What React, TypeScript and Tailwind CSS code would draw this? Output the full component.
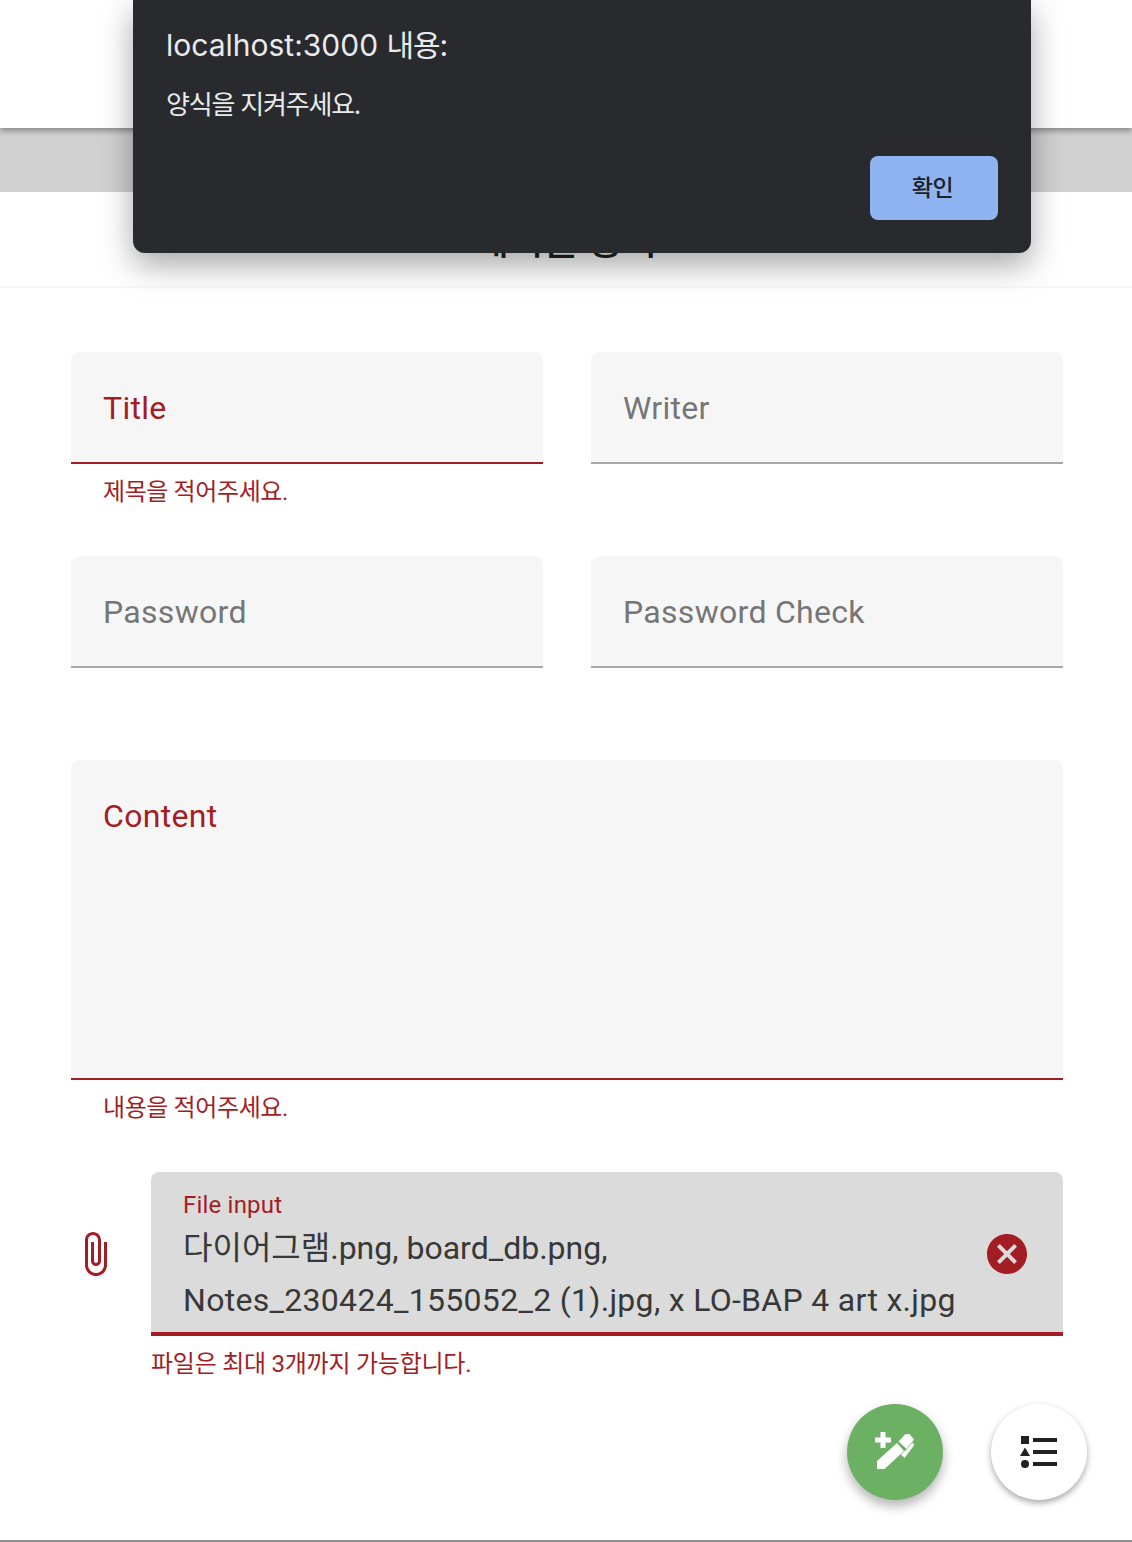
const font = "font-['Roboto','Noto_Sans_CJK_KR',sans-serif]";

function Field({ label, error }: { label: string; error?: string }) {
  return (
    <div className="w-[472px]">
      <div
        className={
          "flex h-28 items-center rounded-t-lg border-b-2 bg-[#f6f6f6] pl-8 pt-[2px] text-[32px] tracking-[0.3px] " +
          (error ? "border-[#a31d25] text-[#a31d25]" : "border-[#a8a8a8] text-[#767676]")
        }
      >
        {label}
      </div>
      <div className="h-[40px] pl-8 pt-[14px] text-2xl leading-[28px] tracking-[-0.4px] text-[#a31d25]">{error}</div>
    </div>
  );
}

function AddPenIcon() {
  return (
    <svg viewBox="0 0 48 48" className="h-12 w-12" fill="white">
      <path d="M9.500 4h5v5.500H20v5h-5.500V20h-5v-5.500H4v-5h5.500z" />
      <path d="M6 33l20-18 7 8-19.500 18H6z" />
      <path d="M27.500 13.500l7-7.500h4l4.500 5.500-7.300 9.500z" />
      <path d="M41.500 14.500l1.800 2.500L33.500 30l-3.500-3.500 7-6.500z" />
    </svg>
  );
}

function ListIcon() {
  return (
    <svg viewBox="0 0 48 48" className="h-12 w-12" fill="#212121">
      <rect x="6" y="8" width="8" height="8" />
      <path d="M10 19.500l5 8.500H5z" />
      <circle cx="10" cy="36" r="4" />
      <rect x="18" y="10" width="24" height="4" />
      <rect x="18" y="22" width="24" height="4" />
      <rect x="18" y="34" width="24" height="4" />
    </svg>
  );
}

export default function App() {
  return (
    <div className={"relative h-[1542px] overflow-hidden bg-white text-[#212121] " + font}>
      <header className="relative z-10 h-32 bg-white shadow-[0_3px_6px_rgba(0,0,0,0.35)]" />
      <div className="h-16 bg-[#d1d1d1]" />
      <div className="flex h-24 items-center justify-center border-b-2 border-[#f7f7f7] pt-1 text-[38px] font-medium">
        게시글 등록
      </div>

      <form className="pl-[71px] pr-[69px] pt-16">
        <div className="flex gap-12">
          <Field label="Title" error="제목을 적어주세요." />
          <Field label="Writer" />
        </div>
        <div className="mt-[52px] flex gap-12">
          <Field label="Password" />
          <Field label="Password Check" />
        </div>
        <div className="mt-[52px]">
          <div className="h-[320px] rounded-t-lg border-b-2 border-[#a31d25] bg-[#f6f6f6] pl-8 pt-[34px] text-[32px] leading-[44px] tracking-[0.3px] text-[#a31d25]">
            Content
          </div>
          <div className="pl-8 pt-[14px] text-2xl leading-[28px] tracking-[-0.4px] text-[#a31d25]">내용을 적어주세요.</div>
        </div>

        <div className="mt-[50px] flex">
          <div className="w-[80px] shrink-0 pt-[58px]">
            <svg viewBox="0 0 24 24" className="h-12 w-12" fill="#a31d25">
              <path d="M16.500 6v11.500c0 2.210-1.790 4-4 4s-4-1.790-4-4V5c0-1.380 1.120-2.500 2.500-2.500s2.500 1.120 2.500 2.500v10.500c0 .55-.45 1-1 1s-1-.45-1-1V6H10v9.500c0 1.380 1.120 2.500 2.500 2.500s2.500-1.120 2.500-2.500V5c0-2.210-1.790-4-4-4S7 2.790 7 5v12.500c0 3.040 2.460 5.500 5.500 5.500s5.500-2.460 5.500-5.500V6h-1.500z" />
            </svg>
          </div>
          <div className="w-[912px]">
            <div className="relative h-[164px] rounded-t-lg border-b-4 border-[#a31d25] bg-[#dbdbdb] pl-8 pt-[18px] pr-[100px]">
              <div className="text-2xl leading-[30px] tracking-[0.2px] text-[#a31d25]">File input</div>
              <div className="mt-[3px] text-[32px] leading-[51px] text-[#383838]">다이어그램.png, board_db.png,</div>
              <div className="text-[32px] leading-[52px] tracking-[0.3px] text-[#383838]">
                Notes_230424_155052_2 (1).jpg, x LO-BAP 4 art x.jpg
              </div>
              <svg viewBox="0 0 24 24" className="absolute right-[32px] top-[58px] h-12 w-12" fill="#a31d25">
                <path d="M12 2C6.470 2 2 6.470 2 12s4.470 10 10 10 10-4.470 10-10S17.530 2 12 2zm5 13.590L15.590 17 12 13.410 8.410 17 7 15.590 10.590 12 7 8.410 8.410 7 12 10.590 15.590 7 17 8.410 13.410 12 17 15.590z" />
              </svg>
            </div>
            <div className="pt-[14px] text-2xl leading-[28px] tracking-[-0.25px] text-[#a31d25]">파일은 최대 3개까지 가능합니다.</div>
          </div>
        </div>
      </form>

      <div className="absolute left-[847px] top-[1404px] flex h-24 w-24 items-center justify-center rounded-full bg-[#6cb064] shadow-[0_6px_12px_rgba(0,0,0,0.3)]">
        <AddPenIcon />
      </div>
      <div className="absolute left-[991px] top-[1404px] flex h-24 w-24 items-center justify-center rounded-full bg-white shadow-[0_3px_6px_rgba(0,0,0,0.35)]">
        <ListIcon />
      </div>
      <div className="absolute bottom-0 left-0 h-[2px] w-full bg-[#8f8f8f]" />

      {/* browser alert */}
      <div className="absolute left-[133px] top-0 z-20 h-[253px] w-[898px] rounded-b-xl bg-[#292a2d] font-['Inter','Noto_Sans_CJK_KR',sans-serif] shadow-[0_12px_32px_rgba(0,0,0,0.35)]">
        <div className="absolute left-[33px] top-[27px] text-[30px] leading-9 text-[#e8eaed]">
          localhost:3000 <span className="tracking-[-1.2px]">내용</span>:
        </div>
        <div className="absolute left-[33px] top-[89px] text-[26px] leading-8 tracking-[-1.200px] text-[#e8eaed]">양식을 지켜주세요.</div>
        <div className="absolute left-[737px] top-[156px] flex h-16 w-32 items-center justify-center rounded-lg bg-[#8fb4f2] pr-[3px] text-[23px] font-medium tracking-[-0.5px] text-[#202124]">
          확인
        </div>
      </div>
    </div>
  );
}
